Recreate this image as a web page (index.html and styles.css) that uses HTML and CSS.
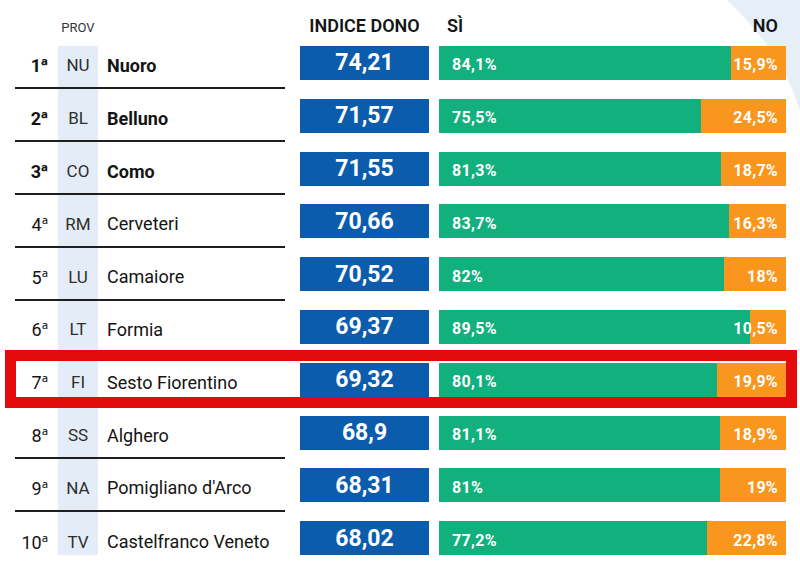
FILE: index.html
```html
<!DOCTYPE html>
<html lang="it">
<head>
<meta charset="utf-8">
<title>Indice Dono</title>
<link rel="stylesheet" href="styles.css">
</head>
<body>
<div class="board">
  <svg class="corner" width="80" height="120" viewBox="720 0 80 120" aria-hidden="true">
    <path d="M727 0 Q785 55 800 112 L800 0 Z" fill="#e6eef7"/>
  </svg>
  <div class="head">
    <span class="h-rank"></span>
    <span class="h-prov">PROV</span>
    <span class="h-name"></span>
    <span class="h-index">INDICE DONO</span>
    <div class="h-bar"><span>SÌ</span><span>NO</span></div>
  </div>

  <div class="row strong">
    <div class="place"><span class="rank">1<span class="ord">ª</span></span><span class="prov">NU</span><span class="name">Nuoro</span></div>
    <div class="index">74,21</div>
    <div class="bar"><div class="yes" style="width:84.1%">84,1%</div><div class="no">15,9%</div></div>
  </div>
  <div class="row strong">
    <div class="place"><span class="rank">2<span class="ord">ª</span></span><span class="prov">BL</span><span class="name">Belluno</span></div>
    <div class="index">71,57</div>
    <div class="bar"><div class="yes" style="width:75.5%">75,5%</div><div class="no">24,5%</div></div>
  </div>
  <div class="row strong">
    <div class="place"><span class="rank">3<span class="ord">ª</span></span><span class="prov">CO</span><span class="name">Como</span></div>
    <div class="index">71,55</div>
    <div class="bar"><div class="yes" style="width:81.3%">81,3%</div><div class="no">18,7%</div></div>
  </div>
  <div class="row">
    <div class="place"><span class="rank">4<span class="ord">ª</span></span><span class="prov">RM</span><span class="name">Cerveteri</span></div>
    <div class="index">70,66</div>
    <div class="bar"><div class="yes" style="width:83.7%">83,7%</div><div class="no">16,3%</div></div>
  </div>
  <div class="row">
    <div class="place"><span class="rank">5<span class="ord">ª</span></span><span class="prov">LU</span><span class="name">Camaiore</span></div>
    <div class="index">70,52</div>
    <div class="bar"><div class="yes" style="width:82%">82%</div><div class="no">18%</div></div>
  </div>
  <div class="row">
    <div class="place"><span class="rank">6<span class="ord">ª</span></span><span class="prov">LT</span><span class="name">Formia</span></div>
    <div class="index">69,37</div>
    <div class="bar"><div class="yes" style="width:89.5%">89,5%</div><div class="no">10,5%</div></div>
  </div>
  <div class="row highlight">
    <div class="place"><span class="rank">7<span class="ord">ª</span></span><span class="prov">FI</span><span class="name">Sesto Fiorentino</span></div>
    <div class="index">69,32</div>
    <div class="bar"><div class="yes" style="width:80.1%">80,1%</div><div class="no">19,9%</div></div>
    <div class="frame"></div>
  </div>
  <div class="row">
    <div class="place"><span class="rank">8<span class="ord">ª</span></span><span class="prov">SS</span><span class="name">Alghero</span></div>
    <div class="index">68,9</div>
    <div class="bar"><div class="yes" style="width:81.1%">81,1%</div><div class="no">18,9%</div></div>
  </div>
  <div class="row">
    <div class="place"><span class="rank">9<span class="ord">ª</span></span><span class="prov">NA</span><span class="name">Pomigliano d'Arco</span></div>
    <div class="index">68,31</div>
    <div class="bar"><div class="yes" style="width:81%">81%</div><div class="no">19%</div></div>
  </div>
  <div class="row last">
    <div class="place"><span class="rank">10<span class="ord">ª</span></span><span class="prov">TV</span><span class="name">Castelfranco Veneto</span></div>
    <div class="index">68,02</div>
    <div class="bar"><div class="yes" style="width:77.2%">77,2%</div><div class="no">22,8%</div></div>
  </div>
</div>
</body>
</html>
```

FILE: styles.css
```css
html {
  background: #ffffff;
}

body {
  margin: 0;
  font-family: Roboto, "Noto Sans", sans-serif;
  color: #141414;
}

.board {
  position: relative;
  width: 800px;
  height: 567px;
  overflow: hidden;
}

.corner {
  position: absolute;
  top: 0;
  right: 0;
  z-index: -1;
}

/* header */
.head {
  display: flex;
  align-items: baseline;
  height: 36.6px;
  box-sizing: border-box;
  padding-top: 16px;
  line-height: 20px;
}

.h-rank {
  width: 58px;
}

.h-prov {
  width: 40px;
  text-align: center;
  font-size: 13px;
  color: #333;
}

.h-name {
  width: 202px;
}

.h-index {
  width: 129px;
  text-align: center;
  font-size: 18px;
  font-weight: 600;
}

.h-bar {
  margin-left: 10px;
  width: 347px;
  box-sizing: border-box;
  padding: 0 8px;
  display: flex;
  justify-content: space-between;
  font-size: 18px;
  font-weight: 600;
}

/* rows */
.row {
  display: flex;
  align-items: center;
  height: 52.8px;
}

.place {
  align-self: stretch;
  display: flex;
  align-items: center;
  width: 270px;
  margin-left: 15px;
  box-sizing: border-box;
  border-bottom: 2px solid #1e1e1e;
  font-size: 18px;
}

.row.last .place {
  border-bottom: none;
}

.rank {
  width: 33px;
  padding-top: 7px;
  text-align: right;
  white-space: nowrap;
}

.ord {
  font-family: "Open Sans", "Noto Sans", sans-serif;
  font-size: 18px;
}

.prov {
  align-self: stretch;
  display: flex;
  align-items: center;
  justify-content: center;
  width: 40px;
  margin-left: 10px;
  padding-top: 7px;
  box-sizing: border-box;
  background: #e4edf7;
  color: #2e2e2e;
  font-size: 17px;
}

.head + .row .prov {
  margin-top: 9.4px;
  padding-top: 0;
  padding-bottom: 2.4px;
}

.row.last .prov {
  margin-bottom: 9.4px;
  padding-top: 16.4px;
}

.name {
  padding-left: 9px;
  padding-top: 7px;
  white-space: nowrap;
}

.strong .rank,
.strong .name {
  font-weight: 700;
}

.index {
  margin-left: 15px;
  width: 129px;
  height: 34px;
  display: flex;
  align-items: center;
  justify-content: center;
  background: #0b5cad;
  color: #ffffff;
  font-size: 23px;
  font-weight: 700;
}

.bar {
  margin-left: 10px;
  width: 347px;
  height: 34px;
  display: flex;
  background: #f8961d;
  color: #ffffff;
  font-size: 16px;
  font-weight: 700;
  letter-spacing: 0.3px;
}

.yes {
  display: flex;
  align-items: center;
  box-sizing: border-box;
  padding-left: 13px;
  padding-top: 4px;
  background: #11b07d;
  white-space: nowrap;
}

.no {
  flex: 1;
  min-width: 0;
  display: flex;
  align-items: center;
  justify-content: flex-end;
  padding-right: 8px;
  padding-top: 4px;
  white-space: nowrap;
}

/* highlighted row */
.highlight {
  position: relative;
}

.frame {
  position: absolute;
  top: -3.4px;
  left: 5px;
  width: 792px;
  height: 58px;
  box-sizing: border-box;
  border: 11px solid #e20a0a;
}
```
